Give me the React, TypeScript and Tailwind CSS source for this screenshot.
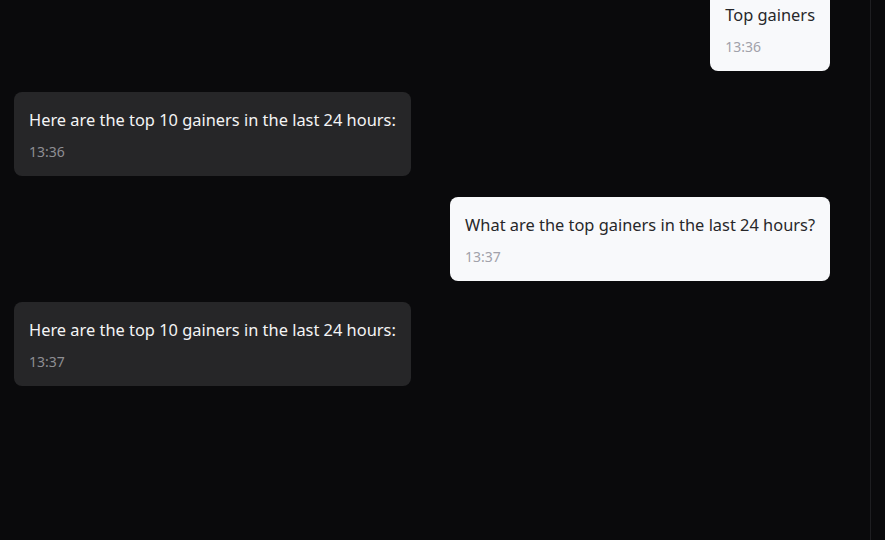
import React from "react";

type Message = {
  id: number;
  role: "user" | "assistant";
  text: string;
  time: string;
};

const messages: Message[] = [
  { id: 1, role: "user", text: "Top gainers", time: "13:36" },
  { id: 2, role: "assistant", text: "Here are the top 10 gainers in the last 24 hours:", time: "13:36" },
  { id: 3, role: "user", text: "What are the top gainers in the last 24 hours?", time: "13:37" },
  { id: 4, role: "assistant", text: "Here are the top 10 gainers in the last 24 hours:", time: "13:37" },
];

function Bubble({ m }: { m: Message }) {
  const isUser = m.role === "user";
  return (
    <div className={isUser ? "flex justify-end" : "flex justify-start"}>
      <div
        className={
          isUser
            ? "rounded-lg bg-[#f8f9fb] px-[15px] pt-4 pb-[14px] text-[#27272a]"
            : "rounded-lg bg-[#262628] px-[15px] pt-4 pb-[14px] text-[#f4f4f5]"
        }
      >
        <p className="text-[16.4px] leading-6">{m.text}</p>
        <p className={isUser ? "mt-[10px] text-sm leading-5 text-[#a1a1aa]" : "mt-[10px] text-sm leading-5 text-[#8e8e93]"}>
          {m.time}
        </p>
      </div>
    </div>
  );
}

export default function App() {
  return (
    <div className="flex h-[540px] w-[885px] overflow-hidden bg-[#0a0a0c] font-['Noto_Sans',sans-serif]">
      <div className="h-full w-[871px] overflow-hidden border-r border-[#1e1e21]">
        <div className="-mt-[13px] flex flex-col gap-[21px] pl-[14px] pr-[40px]">
          {messages.map((m) => (
            <Bubble key={m.id} m={m} />
          ))}
        </div>
      </div>
      <div className="h-full flex-1 bg-[#0a0a0c]" />
    </div>
  );
}
